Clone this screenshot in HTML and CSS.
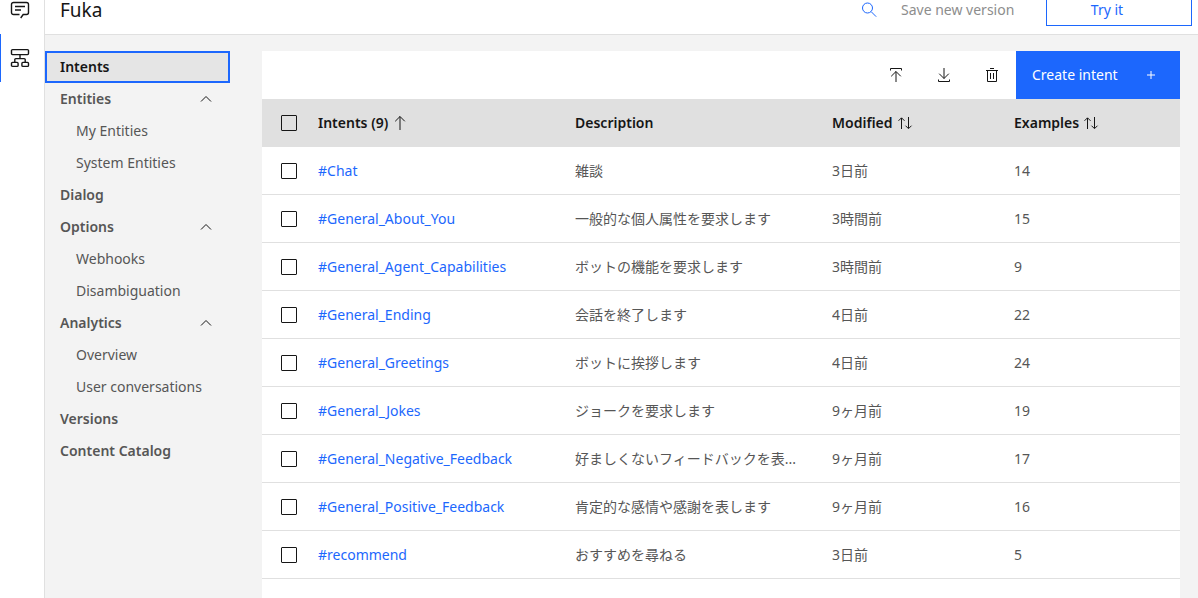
FILE: index.html
```html
<!DOCTYPE html>
<html lang="en">
<head>
<meta charset="utf-8">
<meta name="viewport" content="width=device-width, initial-scale=1">
<title>Fuka</title>
<link rel="stylesheet" href="styles.css">
</head>
<body>
<svg class="sprite" aria-hidden="true">
  <symbol id="chevron" viewBox="0 0 16 16"><path d="M3 10.500 8 5.500l5 5"/></symbol>
  <symbol id="sort" viewBox="0 0 20 20"><path d="M6.500 16V5M3.500 7.800l3-3 3 3M13.500 4v11M10.500 12.700l3 3 3-3"/></symbol>
</svg>
<div class="app">
  <nav class="rail" aria-label="Assistant">
    <a class="rail-item" href="#assistants" aria-label="Assistants">
      <svg class="icon" viewBox="0 0 20 20"><path d="M9.500 14.500H3.500a2 2 0 0 1-2-2V4.500a2 2 0 0 1 2-2h13a2 2 0 0 1 2 2v8a2 2 0 0 1-2 2h-3.300l-2.500 3.500M5 6.500h10M5 10h6" stroke-width="1.400"/></svg>
    </a>
    <a class="rail-item rail-item-active" href="#skills" aria-label="Skills">
      <svg class="icon" viewBox="0 0 20 20"><path d="M2.500 1.600h15a1 1 0 0 1 1 1v3a1 1 0 0 1-1 1h-15a1 1 0 0 1-1-1v-3a1 1 0 0 1 1-1zM10 6.600v4M4.800 14.400v-2.800a1 1 0 0 1 1-1h8.400a1 1 0 0 1 1 1v2.800M2.500 14.400h4.600a1 1 0 0 1 1 1v2a1 1 0 0 1-1 1H2.500a1 1 0 0 1-1-1v-2a1 1 0 0 1 1-1zM12.900 14.400h4.600a1 1 0 0 1 1 1v2a1 1 0 0 1-1 1h-4.600a1 1 0 0 1-1-1v-2a1 1 0 0 1 1-1z" stroke-width="1.400"/></svg>
    </a>
  </nav>
  <div class="page">
    <header class="topbar">
      <h1 class="title">Fuka</h1>
      <button class="search" type="button" aria-label="Search"><svg class="icon" viewBox="0 0 20 20"><circle cx="8.500" cy="8" r="5"/><path d="m12.200 11.700 5 5"/></svg></button>
      <button class="save" type="button" disabled>Save new version</button>
      <button class="try" type="button">Try it</button>
    </header>
    <div class="body">
      <nav class="sidebar" aria-label="Skill">
        <a class="nav-item nav-current" href="#intents" aria-current="page">Intents</a>
        <button class="nav-item" type="button" aria-expanded="true">Entities<svg class="chevron"><use href="#chevron"/></svg></button>
        <a class="nav-item nav-sub" href="#my-entities">My Entities</a>
        <a class="nav-item nav-sub" href="#system-entities">System Entities</a>
        <a class="nav-item" href="#dialog">Dialog</a>
        <button class="nav-item" type="button" aria-expanded="true">Options<svg class="chevron"><use href="#chevron"/></svg></button>
        <a class="nav-item nav-sub" href="#webhooks">Webhooks</a>
        <a class="nav-item nav-sub" href="#disambiguation">Disambiguation</a>
        <button class="nav-item" type="button" aria-expanded="true">Analytics<svg class="chevron"><use href="#chevron"/></svg></button>
        <a class="nav-item nav-sub" href="#overview">Overview</a>
        <a class="nav-item nav-sub" href="#conversations">User conversations</a>
        <a class="nav-item" href="#versions">Versions</a>
        <a class="nav-item" href="#catalog">Content Catalog</a>
      </nav>
      <main class="content">
        <div class="toolbar">
          <button class="tool" type="button" aria-label="Upload"><svg class="icon" viewBox="0 0 20 20"><path d="M4.500 5.500v-2h11v2M10 17V6.500M5.200 11.300 10 6.500l4.800 4.800"/></svg></button>
          <button class="tool" type="button" aria-label="Download"><svg class="icon" viewBox="0 0 20 20"><path d="M4.500 14.500v2h11v-2M10 3v10.500M5.200 8.700l4.800 4.800 4.800-4.800"/></svg></button>
          <button class="tool" type="button" aria-label="Delete"><svg class="icon" viewBox="0 0 20 20"><path d="M4 5.500h12M8 3.500h4M5.500 5.500v11h9v-11M8.500 8v6M11.500 8v6"/></svg></button>
          <button class="create" type="button">Create intent<svg class="plus" viewBox="0 0 16 16"><path d="M8 4v8M4 8h8"/></svg></button>
        </div>
        <table class="intents" lang="ja">
          <colgroup><col class="col-check"><col class="col-name"><col class="col-desc"><col class="col-mod"><col class="col-ex"></colgroup>
          <thead>
            <tr>
              <th><input class="check" type="checkbox" aria-label="Select all"></th>
              <th><button class="sort" type="button">Intents (9)<svg class="icon" viewBox="0 0 20 20"><path d="M10 17V3.500M5.200 8.300 10 3.500l4.800 4.800"/></svg></button></th>
              <th>Description</th>
              <th><button class="sort" type="button">Modified<svg class="icon"><use href="#sort"/></svg></button></th>
              <th><button class="sort" type="button">Examples<svg class="icon"><use href="#sort"/></svg></button></th>
            </tr>
          </thead>
          <tbody>
            <tr><td><input class="check" type="checkbox" aria-label="Select #Chat"></td><td><a href="#chat">#Chat</a></td><td>雑談</td><td>3日前</td><td>14</td></tr>
            <tr><td><input class="check" type="checkbox" aria-label="Select #General_About_You"></td><td><a href="#about">#General_About_You</a></td><td>一般的な個人属性を要求します</td><td>3時間前</td><td>15</td></tr>
            <tr><td><input class="check" type="checkbox" aria-label="Select #General_Agent_Capabilities"></td><td><a href="#agent">#General_Agent_Capabilities</a></td><td>ボットの機能を要求します</td><td>3時間前</td><td>9</td></tr>
            <tr><td><input class="check" type="checkbox" aria-label="Select #General_Ending"></td><td><a href="#ending">#General_Ending</a></td><td>会話を終了します</td><td>4日前</td><td>22</td></tr>
            <tr><td><input class="check" type="checkbox" aria-label="Select #General_Greetings"></td><td><a href="#greetings">#General_Greetings</a></td><td>ボットに挨拶します</td><td>4日前</td><td>24</td></tr>
            <tr><td><input class="check" type="checkbox" aria-label="Select #General_Jokes"></td><td><a href="#jokes">#General_Jokes</a></td><td>ジョークを要求します</td><td>9ヶ月前</td><td>19</td></tr>
            <tr><td><input class="check" type="checkbox" aria-label="Select #General_Negative_Feedback"></td><td><a href="#negative">#General_Negative_Feedback</a></td><td>好ましくないフィードバックを表...</td><td>9ヶ月前</td><td>17</td></tr>
            <tr><td><input class="check" type="checkbox" aria-label="Select #General_Positive_Feedback"></td><td><a href="#positive">#General_Positive_Feedback</a></td><td>肯定的な感情や感謝を表します</td><td>9ヶ月前</td><td>16</td></tr>
            <tr><td><input class="check" type="checkbox" aria-label="Select #recommend"></td><td><a href="#recommend">#recommend</a></td><td>おすすめを尋ねる</td><td>3日前</td><td>5</td></tr>
          </tbody>
        </table>
      </main>
    </div>
  </div>
</div>
</body>
</html>
```

FILE: styles.css
```css
:root {
  --blue: #1c67fd;
  --ink: #161616;
  --muted: #565656;
  --line: #e0e0e0;
  --ground: #f3f3f3;
}

* { box-sizing: border-box; }

body {
  margin: 0;
  background: var(--ground);
  color: var(--muted);
  font: 14px/18px "Noto Sans", "Noto Sans CJK JP", sans-serif;
}

button {
  margin: 0;
  padding: 0;
  border: 0;
  background: none;
  color: inherit;
  font: inherit;
  text-align: left;
}

a { color: var(--blue); text-decoration: none; }

svg { flex: none; fill: none; stroke: currentColor; }

.sprite { display: none; }
.icon { display: block; width: 20px; height: 20px; }

.app { display: flex; min-height: 100vh; overflow: hidden; }

/* Icon rail */
.rail {
  flex: none;
  width: 45px;
  margin-top: -14px;
  border-right: 1px solid var(--line);
  background: #fff;
}
.rail-item {
  display: flex;
  align-items: center;
  height: 48px;
  padding-left: 9px;
  border-left: 1px solid transparent;
  color: var(--ink);
}
.rail-item-active { border-color: var(--blue); }

.page { display: flex; flex: 1; flex-direction: column; min-width: 0; }

/* Top bar */
.topbar {
  display: flex;
  align-items: flex-end;
  height: 35px;
  padding: 0 6px 8px 15px;
  border-bottom: 1px solid var(--line);
  background: #fff;
  line-height: 32px;
}
.title {
  flex: 1;
  margin: 0 0 6px;
  color: var(--ink);
  font-size: 19px;
  font-weight: 400;
  line-height: 20px;
}
.search { display: flex; align-items: center; height: 32px; margin-right: 22px; color: var(--blue); }
.save { width: 145px; color: #8d8d8d; }
.try {
  width: 146px;
  height: 32px;
  padding-right: 24px;
  border: 1px solid var(--blue);
  color: var(--blue);
  line-height: 30px;
  text-align: center;
}

.body { display: flex; flex: 1; padding: 16px 18px 0 0; }

/* Section navigation */
.sidebar { flex: none; width: 185px; margin-right: 32px; }
.nav-item {
  display: flex;
  align-items: center;
  justify-content: space-between;
  width: 100%;
  height: 32px;
  padding: 0 16px 0 15px;
  color: var(--muted);
  font-weight: 600;
}
.nav-sub { padding-left: 31px; font-weight: 400; }
.nav-current {
  padding-left: 13px;
  border: 2px solid var(--blue);
  background: #e5e5e5;
  color: var(--ink);
}
.chevron { width: 16px; height: 16px; color: var(--ink); }

/* Intents table */
.content { flex: 1; min-width: 0; background: #fff; }
.toolbar { display: flex; justify-content: flex-end; height: 48px; }
.tool { display: grid; place-items: center; width: 48px; color: var(--ink); }
.create {
  display: flex;
  align-items: center;
  justify-content: space-between;
  width: 164px;
  padding: 0 21px 0 16px;
  background: var(--blue);
  color: #fff;
}
.plus { width: 16px; height: 16px; }

.intents { width: 100%; border-collapse: separate; border-spacing: 0; table-layout: fixed; }
.col-check { width: 56px; }
.col-name, .col-desc { width: 28%; }
.col-mod { width: 182px; }
.intents th, .intents td {
  height: 48px;
  padding: 0 24px 0 0;
  overflow: hidden;
  text-align: left;
  text-overflow: ellipsis;
  white-space: nowrap;
}
.intents th { background: #e0e0e0; color: var(--ink); font-weight: 600; }
.intents td { border-bottom: 1px solid var(--line); }
.intents th:first-child, .intents td:first-child { padding: 0 0 0 19px; }
.sort { display: flex; align-items: center; gap: 2px; }
.check {
  display: block;
  width: 16px;
  height: 16px;
  margin: 0;
  appearance: none;
  border: 1px solid var(--ink);
  border-radius: 1px;
}
.check:checked { background: var(--ink); }
```
